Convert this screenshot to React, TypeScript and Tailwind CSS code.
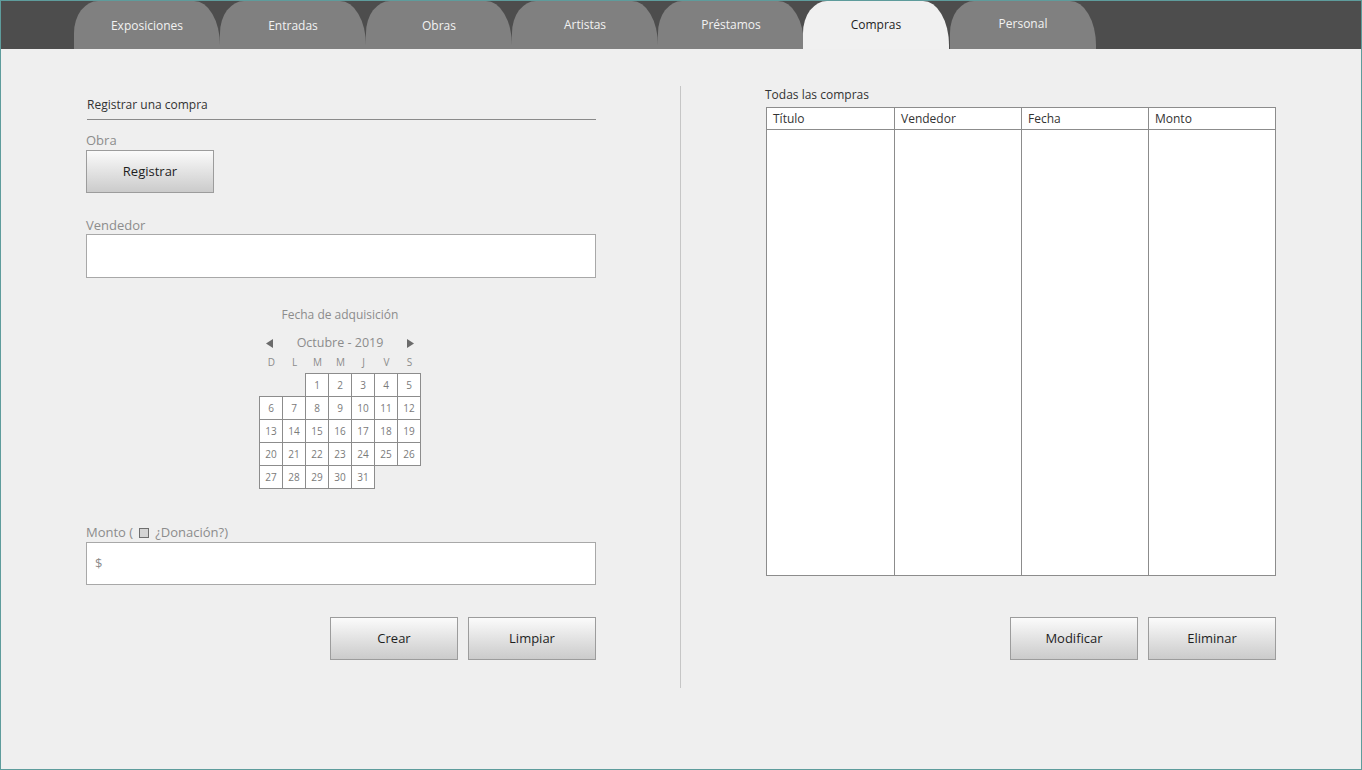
import React from "react";

const tabs = ["Exposiciones", "Entradas", "Obras", "Artistas", "Préstamos", "Compras", "Personal"];

function Btn({ label }: { label: string }) {
  return (
    <div className="w-[128px] h-[43px] flex items-center justify-center border border-[#9c9c9c] bg-gradient-to-b from-[#fbfbfb] to-[#cbcbcb] text-[13px] text-[#1e1e1e]">
      {label}
    </div>
  );
}

function Arrow({ dir }: { dir: "l" | "r" }) {
  return (
    <svg width="7" height="9" viewBox="0 0 7 9">
      {dir === "l" ? <polygon points="7,0 7,9 0,4.5" fill="#6b6b6b" /> : <polygon points="0,0 0,9 7,4.5" fill="#6b6b6b" />}
    </svg>
  );
}

export default function App() {
  const days: (number | null)[] = [null, null, ...Array.from({ length: 31 }, (_, i) => i + 1)];
  const headers = ["D", "L", "M", "M", "J", "V", "S"];
  return (
    <div
      className="w-[1362px] h-[770px] border border-[#5e9c9c] bg-[#efefef] flex flex-col overflow-hidden"
      style={{ fontFamily: '"Open Sans", "Noto Sans", sans-serif' }}
    >
      {/* Tab bar */}
      <div className="h-[48px] bg-[#4d4d4d] flex items-end pl-[73px] shrink-0">
        {tabs.map((t, idx) => {
          const active = t === "Compras";
          const shift = t === "Personal" ? "-mt-[2px]" : idx >= 3 ? "-mt-[1px]" : "";
          return (
            <div
              key={t}
              className={`w-[146px] h-[48px] flex justify-center pt-[16px] text-[12px] rounded-tl-[24px_32px] rounded-tr-[26px_44px] ${
                active ? "bg-[#f0f0f0] text-[#1e1e1e] -ml-px mr-px" : "bg-[#808080] text-[#f2f2f2]"
              }`}
            >
              <span className={shift}>{t}</span>
            </div>
          );
        })}
      </div>

      {/* Body */}
      <div className="flex flex-1">
        {/* Left column */}
        <div className="ml-[85px] w-[510px] flex flex-col">
          <div className="mt-[47px] h-[24px] pt-px ml-px border-b border-[#8a8a8a] text-[12px] leading-[16px] text-[#333]">
            Registrar una compra
          </div>
          <div className="mt-[12px] text-[13px] leading-[17px] text-[#8c8c8c]">Obra</div>
          <div className="mt-[1px]">
            <Btn label="Registrar" />
          </div>
          <div className="mt-[24px] text-[13px] leading-[17px] text-[#8c8c8c]">Vendedor</div>
          <div className="mt-0 h-[44px] bg-white border border-[#a8a8a8]" />

          <div className="mt-[29px] mr-[2px] flex flex-col items-center">
            <div className="text-[12px] leading-[16px] text-[#8c8c8c]">Fecha de adquisición</div>
            <div className="mt-[12px] w-[162px] h-[16px] flex items-center justify-between px-[7px]">
              <Arrow dir="l" />
              <span className="text-[12.5px] leading-[16px] text-[#8c8c8c]">Octubre - 2019</span>
              <Arrow dir="r" />
            </div>
            <div className="mt-[3px] grid grid-cols-[repeat(7,23px)] w-[162px] pl-px">
              {headers.map((h, i) => (
                <div key={i} className="h-[16px] flex items-center justify-center text-[10px] text-[#8c8c8c]">
                  {h}
                </div>
              ))}
            </div>
            <div className="mt-[3px] grid grid-cols-[repeat(7,23px)] auto-rows-[23px] w-[162px]">
              {days.map((d, i) =>
                d === null ? (
                  <div key={i} />
                ) : (
                  <div
                    key={i}
                    className="w-[24px] h-[24px] bg-white border border-[#8c8c8c] flex items-center justify-center text-[10px] text-[#7a7a7a]"
                  >
                    {d}
                  </div>
                )
              )}
            </div>
          </div>

          <div className="mt-[36px] flex items-center text-[13px] leading-[17px] text-[#8c8c8c]">
            <span>Monto (</span>
            <span className="ml-[6px] mr-[6px] w-[10px] h-[10px] border border-[#6e6e6e] bg-[#d4d4d4] inline-block" />
            <span>¿Donación?)</span>
          </div>
          <div className="mt-[1px] h-[43px] bg-white border border-[#a8a8a8] flex items-center pl-[8px] text-[13px] text-[#8c8c8c]">
            $
          </div>
          <div className="mt-[32px] flex justify-end gap-[10px]">
            <Btn label="Crear" />
            <Btn label="Limpiar" />
          </div>
        </div>

        {/* Divider */}
        <div className="ml-[84px] mt-[37px] w-px h-[602px] bg-[#c6c6c6]" />

        {/* Right column */}
        <div className="ml-[85px] w-[510px] flex flex-col">
          <div className="mt-[38px] -ml-px text-[12px] leading-[16px] text-[#333]">Todas las compras</div>
          <div className="mt-[4px] h-[469px] border border-[#8c8c8c] bg-white grid grid-cols-4">
            {["Título", "Vendedor", "Fecha", "Monto"].map((h, i) => (
              <div key={h} className={`flex flex-col ${i > 0 ? "border-l border-[#8c8c8c]" : ""}`}>
                <div className="h-[22px] border-b border-[#8c8c8c] px-[6px] flex items-center text-[12px] text-[#333]">
                  {h}
                </div>
              </div>
            ))}
          </div>
          <div className="mt-[41px] flex justify-end gap-[10px]">
            <Btn label="Modificar" />
            <Btn label="Eliminar" />
          </div>
        </div>
      </div>
    </div>
  );
}
